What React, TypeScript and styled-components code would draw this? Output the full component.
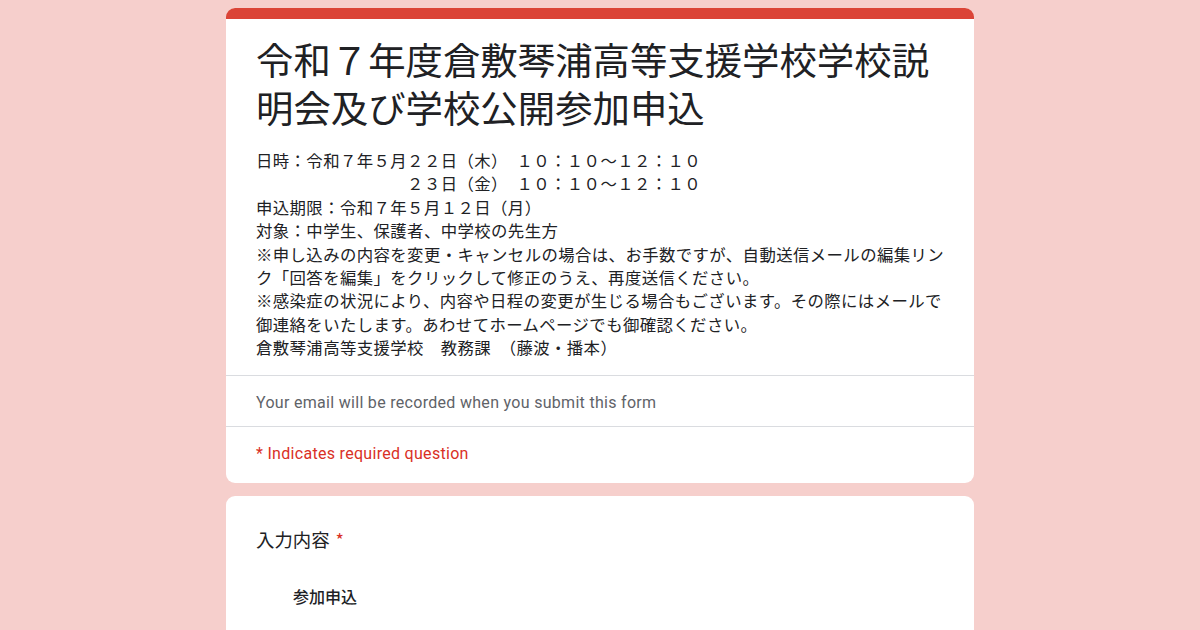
import React from "react";
import styled, { createGlobalStyle } from "styled-components";

const GlobalStyle = createGlobalStyle`
  html, body {
    margin: 0;
    padding: 0;
    background: #f6cfcc;
  }
  body {
    font-family: Roboto, "Noto Sans CJK JP", sans-serif;
    color: #202124;
  }
`;

const Page = styled.div`
  width: 1200px;
  height: 630px;
  overflow: hidden;
  background: #f6cfcc;
  display: flex;
  flex-direction: column;
  align-items: center;
  padding-top: 8px;
  box-sizing: border-box;
  gap: 13px;
`;

const Card = styled.div`
  width: 748px;
  background: #ffffff;
  border-radius: 9px;
  box-sizing: border-box;
  overflow: hidden;
  flex-shrink: 0;
`;

const TopBar = styled.div`
  height: 11px;
  background: #db4437;
`;

const TitleBlock = styled.div`
  padding: 16px 30px 15px;
`;

const Title = styled.h1`
  margin: 0;
  font-family: "Noto Sans CJK JP", sans-serif;
  font-weight: 400;
  font-size: 37.4px;
  line-height: 48px;
  color: #202124;
`;

const Description = styled.div`
  margin-top: 18px;
  font-family: "Noto Sans CJK JP", sans-serif;
  font-size: 16.4px;
  line-height: 23.4px;
  letter-spacing: 0.4px;
  color: #202124;
  white-space: pre;
`;

const InfoRow = styled.div<{ $tone?: "muted" | "alert"; $pt: number; $pb: number }>`
  border-top: 1px solid #dadce0;
  padding: ${(p) => p.$pt}px 30px ${(p) => p.$pb}px;
  font-family: Roboto, sans-serif;
  font-size: 16px;
  line-height: 23px;
  letter-spacing: 0.3px;
  color: ${(p) => (p.$tone === "alert" ? "#d93025" : "#5f6368")};
`;

const QuestionCard = styled(Card)`
  padding: 31px 30px 24px;
  min-height: 200px;
`;

const QuestionTitle = styled.div`
  font-family: "Noto Sans CJK JP", sans-serif;
  font-size: 18.4px;
  line-height: 24px;
  color: #202124;
  display: flex;
  align-items: flex-start;
  gap: 6px;
`;

const Required = styled.span`
  color: #d93025;
  font-size: 18px;
`;

const OptionList = styled.div`
  margin-top: 33px;
  padding-left: 37px;
`;

const OptionLabel = styled.div`
  font-family: "Noto Sans CJK JP", sans-serif;
  font-size: 16px;
  line-height: 24px;
  font-weight: 500;
  color: #202124;
`;

const descriptionText = [
  "日時：令和７年５月２２日（木）　１０：１０～１２：１０",
  "　　　　　　　　　２３日（金）　１０：１０～１２：１０",
  "申込期限：令和７年５月１２日（月）",
  "対象：中学生、保護者、中学校の先生方",
  "※申し込みの内容を変更・キャンセルの場合は、お手数ですが、自動送信メールの編集リン",
  "ク「回答を編集」をクリックして修正のうえ、再度送信ください。",
  "※感染症の状況により、内容や日程の変更が生じる場合もございます。その際にはメールで",
  "御連絡をいたします。あわせてホームページでも御確認ください。",
  "倉敷琴浦高等支援学校　教務課　（藤波・播本）",
].join("\n");

export default function App() {
  return (
    <>
      <GlobalStyle />
      <Page>
        <Card>
          <TopBar />
          <TitleBlock>
            <Title>
              令和７年度倉敷琴浦高等支援学校学校説
              <br />
              明会及び学校公開参加申込
            </Title>
            <Description>{descriptionText}</Description>
          </TitleBlock>
          <InfoRow $tone="muted" $pt={15} $pb={12}>
            Your email will be recorded when you submit this form
          </InfoRow>
          <InfoRow $tone="alert" $pt={15} $pb={18}>
            * Indicates required question
          </InfoRow>
        </Card>
        <QuestionCard>
          <QuestionTitle>
            入力内容
            <Required>*</Required>
          </QuestionTitle>
          <OptionList>
            <OptionLabel>参加申込</OptionLabel>
          </OptionList>
        </QuestionCard>
      </Page>
    </>
  );
}
